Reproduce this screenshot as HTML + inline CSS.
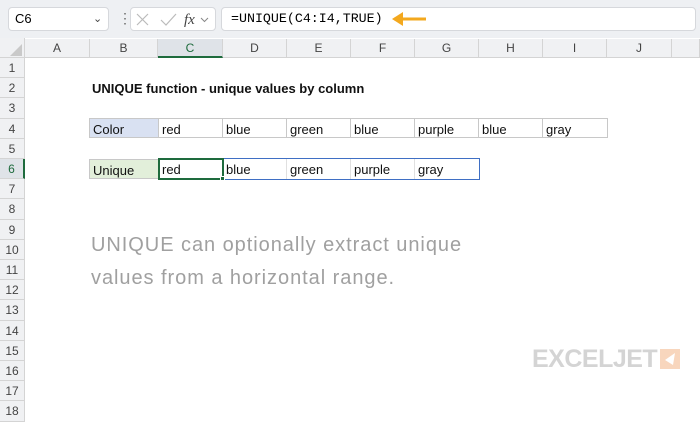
<!DOCTYPE html>
<html><head><style>
*{margin:0;padding:0;box-sizing:border-box}
body{width:700px;height:400px;overflow:hidden;background:#fff;font-family:"Liberation Sans",sans-serif;position:relative}
.a{position:absolute}
.top{left:0;top:0;width:700px;height:38px;background:#eef0f3}
.box{background:#fff;border:1px solid #d6d8dc;border-radius:4px}
.ch{top:39px;height:19px;background:#f0f1f3;border-right:1px solid #d4d4d4;border-bottom:1px solid #d4d4d4;font-size:12px;color:#444;text-align:center;line-height:19px}
.rh{left:0;width:25px;background:#f0f1f3;border-bottom:1px solid #d4d4d4;border-right:1px solid #d4d4d4;font-size:12px;color:#444;text-align:center}
.c{font-size:13px;color:#111;padding-left:3px;height:20px;line-height:21px;border:1px solid #c8c8c8;border-left:none}
</style></head><body>
<div class="a top"></div>
<div class="a box" style="left:8px;top:7px;width:101px;height:24px;font-size:13px;line-height:22px;padding-left:6px">C6<span class="a" style="left:84px;top:0;font-size:11px;color:#444">&#8964;</span></div>
<div class="a" style="left:118px;top:11px;font-size:14px;color:#666;line-height:14px">&#8942;</div>
<div class="a box" style="left:130px;top:7px;width:86px;height:24px"></div>
<svg class="a" style="left:134px;top:11px" width="80" height="16"><path d="M3 3L14 14M14 3L3 14" stroke="#bbb" stroke-width="1.2"/><path d="M27 9L32 14L42 3" stroke="#bbb" stroke-width="1.2" fill="none"/><text x="50" y="13" font-family="Liberation Serif" font-style="italic" font-size="15" fill="#444">fx</text><path d="M67 7L70.5 10.5L74 7" stroke="#888" fill="none"/></svg>
<div class="a box" style="left:221px;top:7px;width:475px;height:24px;font-family:'Liberation Mono',monospace;font-size:13.3px;line-height:22px;padding-left:9px">=UNIQUE(C4:I4,TRUE)</div>
<svg class="a" style="left:390px;top:11px" width="40" height="16"><path d="M4 8H36" stroke="#f3a81e" stroke-width="3"/><path d="M2 8L13 1V15Z" fill="#f3a81e"/></svg>
<div class="a" style="left:0;top:38px;width:25px;height:20px;background:#f0f1f3;border-right:1px solid #d4d4d4;border-bottom:1px solid #d4d4d4"></div>
<svg class="a" style="left:10px;top:44px" width="12" height="12"><path d="M12 0V12H0Z" fill="#c9c9c9"/></svg>
<div class="a ch" style="left:25px;width:65px">A</div>
<div class="a ch" style="left:90px;width:68px">B</div>
<div class="a ch" style="left:158px;width:65px;background:#dfe3e8;color:#1e6b3d;border-bottom:2px solid #1e6b3d">C</div>
<div class="a ch" style="left:223px;width:64px">D</div>
<div class="a ch" style="left:287px;width:64px">E</div>
<div class="a ch" style="left:351px;width:64px">F</div>
<div class="a ch" style="left:415px;width:64px">G</div>
<div class="a ch" style="left:479px;width:64px">H</div>
<div class="a ch" style="left:543px;width:64px">I</div>
<div class="a ch" style="left:607px;width:65px">J</div>
<div class="a ch" style="left:672px;width:28px"></div>
<div id="rows"></div>
<script>
var h='';for(var i=1;i<=18;i++){var t=58+(i-1)*20.2;h+='<div class="a rh" style="top:'+t+'px;height:20.2px;line-height:20px'+(i==6?';background:#dfe3e8;color:#1e6b3d;border-right:2px solid #1e6b3d':'')+'">'+i+'</div>';}
document.getElementById('rows').innerHTML=h;
</script>
<div class="a" style="left:92px;top:81px;font-size:13px;font-weight:bold;color:#111">UNIQUE function - unique values by column</div>
<div class="a c" style="left:89px;top:118px;width:70px;background:#d9e1f2;border-left:1px solid #c8c8c8">Color</div>
<div class="a c" style="left:159px;top:118px;width:64px">red</div>
<div class="a c" style="left:223px;top:118px;width:64px">blue</div>
<div class="a c" style="left:287px;top:118px;width:64px">green</div>
<div class="a c" style="left:351px;top:118px;width:64px">blue</div>
<div class="a c" style="left:415px;top:118px;width:64px">purple</div>
<div class="a c" style="left:479px;top:118px;width:64px">blue</div>
<div class="a c" style="left:543px;top:118px;width:65px">gray</div>
<div class="a c" style="left:89px;top:159px;width:70px;background:#e2efda;border-left:1px solid #c8c8c8">Unique</div>
<div class="a" style="left:158px;top:158px;width:322px;height:22px;border:1px solid #3f6fc4"></div>
<div class="a c" style="left:159px;top:159px;width:64px;border:none">red</div>
<div class="a c" style="left:223px;top:159px;width:64px;border-top:none;border-bottom:none;border-color:#e0e0e0">blue</div>
<div class="a c" style="left:287px;top:159px;width:64px;border-top:none;border-bottom:none;border-color:#e0e0e0">green</div>
<div class="a c" style="left:351px;top:159px;width:64px;border-top:none;border-bottom:none;border-color:#e0e0e0">purple</div>
<div class="a c" style="left:415px;top:159px;width:64px;border:none">gray</div>
<div class="a" style="left:158px;top:158px;width:66px;height:22px;border:2px solid #1e6b3d"></div>
<div class="a" style="left:220px;top:176px;width:5px;height:5px;background:#1e6b3d;border:1px solid #fff"></div>
<div class="a" style="left:91px;top:229px;font-size:20px;line-height:33px;color:#a0a0a0;font-family:'Liberation Sans',sans-serif;letter-spacing:0.95px">UNIQUE can optionally extract unique<br>values from a horizontal range.</div>
<div class="a" style="left:532px;top:345px;font-size:25px;font-weight:bold;color:#d4d4d4;letter-spacing:-0.5px;line-height:28px">EXCELJET</div>
<svg class="a" style="left:660px;top:349px" width="20" height="20"><rect width="20" height="20" fill="#f8d6bd"/><path d="M15 4L5 11L13 16Z" fill="#fff"/></svg>
</body></html>
